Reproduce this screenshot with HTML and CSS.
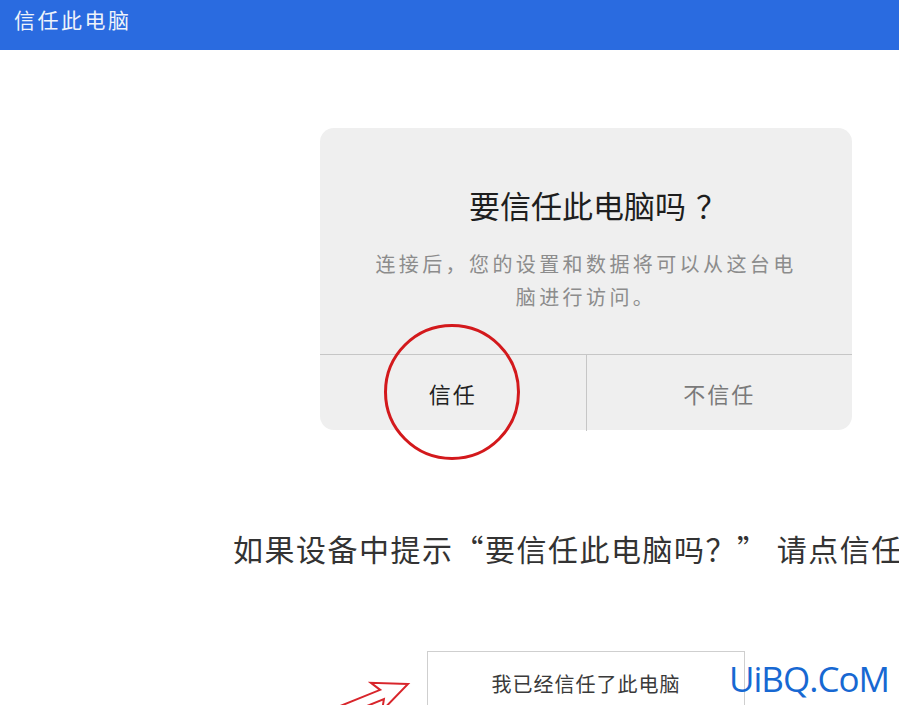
FILE: index.html
```html
<!DOCTYPE html>
<html lang="zh">
<head>
    <meta charset="UTF-8">
    <meta name="viewport" content="width=device-width, initial-scale=1.0">
    <title>信任此电脑</title>
    <link rel="stylesheet" href="styles.css">
</head>
<body>
    <div class="topbar">信任此电脑</div>

    <div class="stage">
        <div class="card">
            <h2 class="card-title">要信任此电脑吗<span class="qmark">？</span></h2>
            <p class="card-text">连接后，您的设置和数据将可以从这台电<br>脑进行访问。</p>
            <div class="card-actions">
                <div class="action action-yes">信任</div>
                <div class="action action-no">不信任</div>
            </div>
            <div class="mark-circle"></div>
        </div>
    </div>

    <p class="hint">如果设备中提示“要信任此电脑吗？” 请点信任</p>

    <div class="bottom-row">
        <svg class="mark-arrow" width="110" height="50" viewBox="0 0 110 50">
            <path d="M0 0 L-34 -15 L-28 -5 L-110 -5 L-110 5 L-28 5 L-34 15 Z"
                  transform="translate(88 24) rotate(-22)"
                  fill="none" stroke="#d8252b" stroke-width="2" stroke-linejoin="miter"/>
        </svg>
        <div class="trusted-btn">我已经信任了此电脑</div>
        <div class="watermark">UiBQ.CoM</div>
    </div>
</body>
</html>
```

FILE: styles.css
```css
html, body {
    margin: 0;
    height: 100%;
    overflow: hidden;
    background-color: #fff;
    font-family: "Noto Sans CJK SC", "Noto Sans", sans-serif;
}
.topbar {
    height: 50px;
    box-sizing: border-box;
    padding: 6px 14px;
    line-height: 26px;
    font-size: 21px;
    letter-spacing: 2.5px;
    color: #eef3fb;
    background-color: #2a6be0;
}
.stage {
    padding-left: 320px;
    padding-top: 78px;
}
.card {
    position: relative;
    width: 532px;
    height: 302px;
    box-sizing: border-box;
    padding-top: 57px;
    background-color: #efefef;
    border-radius: 14px;
    text-align: center;
}
.card-title {
    margin: 0;
    padding-left: 24px;
    font-size: 31px;
    line-height: 40px;
    font-weight: normal;
    color: #1e1e1e;
}
.qmark {
    margin-left: 10px;
    font-family: "Noto Sans CJK TC", sans-serif;
}
.card-text {
    margin: 22px 0 41px;
    font-size: 20px;
    line-height: 33px;
    letter-spacing: 3.4px;
    color: #8c8c8c;
}
.card-actions {
    display: flex;
    height: 76px;
    border-top: 1px solid #c6c6c6;
}
.action {
    flex: 1;
    display: flex;
    align-items: center;
    justify-content: center;
    font-size: 22px;
    letter-spacing: 2px;
}
.action-yes {
    color: #222;
    border-right: 1px solid #c6c6c6;
}
.action-no {
    color: #7a7a7a;
}
.mark-circle {
    position: absolute;
    left: 64px;
    top: 196px;
    width: 136px;
    height: 136px;
    box-sizing: border-box;
    border: 3px solid #d3191c;
    border-radius: 50%;
}
.hint {
    margin: 98px 0 0;
    padding-left: 233px;
    white-space: nowrap;
    font-size: 30px;
    line-height: 40px;
    letter-spacing: 1.5px;
    color: #333;
}
.bottom-row {
    position: relative;
    margin-top: 83px;
    padding-left: 427px;
}
.trusted-btn {
    width: 318px;
    height: 80px;
    box-sizing: border-box;
    padding-top: 18px;
    border: 1px solid #cfcfcf;
    text-align: center;
    font-size: 20px;
    line-height: 28px;
    letter-spacing: 1px;
    color: #3a3a3a;
}
.mark-arrow {
    position: absolute;
    left: 320px;
    top: 9px;
}
.watermark {
    position: absolute;
    left: 729px;
    top: 8px;
    font-family: "Open Sans", sans-serif;
    font-size: 35px;
    line-height: 40px;
    letter-spacing: -1px;
    color: #1768d2;
}
```
